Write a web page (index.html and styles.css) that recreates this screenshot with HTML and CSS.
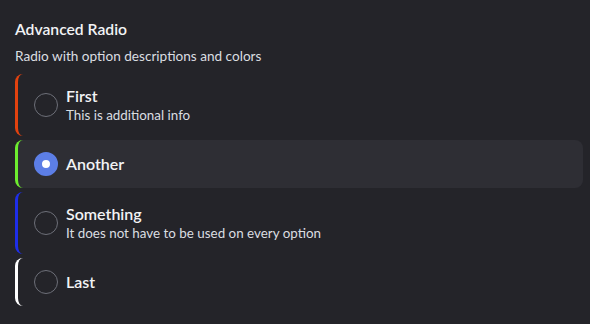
FILE: index.html
```html
<!DOCTYPE html>
<html lang="en">
<head>
    <meta charset="UTF-8">
    <title>Advanced Radio</title>
    <link rel="stylesheet" href="styles.css">
</head>
<body>
<div id="panel">
    <h2 class="title">Advanced Radio</h2>
    <p class="desc">Radio with option descriptions and colors</p>
    <ul class="radio-group">
        <li class="radio-item red">
            <span class="radio"></span>
            <div class="radio-text">
                <div class="radio-label">First</div>
                <div class="radio-info">This is additional info</div>
            </div>
        </li>
        <li class="radio-item green selected">
            <span class="radio"></span>
            <div class="radio-text">
                <div class="radio-label">Another</div>
            </div>
        </li>
        <li class="radio-item blue">
            <span class="radio"></span>
            <div class="radio-text">
                <div class="radio-label">Something</div>
                <div class="radio-info">It does not have to be used on every option</div>
            </div>
        </li>
        <li class="radio-item white">
            <span class="radio"></span>
            <div class="radio-text">
                <div class="radio-label">Last</div>
            </div>
        </li>
    </ul>
</div>
</body>
</html>
```
FILE: styles.css
```css
*{
    margin: 0;
    padding: 0;
    box-sizing: border-box;
}
ul{
    list-style: none;
}
body{
    background: #242429;
    font-family: Lato, "Noto Sans", sans-serif;
    color: #f2f3f5;
}
#panel{
    padding: 19px 7px 0 15px;
}
.title{
    font-size: 15.7px;
    line-height: 20px;
    font-weight: 600;
    color: #f2f3f5;
}
.desc{
    margin-top: 8px;
    font-size: 13.6px;
    line-height: 18px;
    color: #dbdee1;
}
.radio-group{
    margin-top: 9px;
    display: flex;
    flex-direction: column;
    gap: 4px;
}
.radio-item{
    display: flex;
    align-items: center;
    gap: 8px;
    padding: 12px 16px;
    border-left: 3px solid #fff;
    border-radius: 8px;
    cursor: pointer;
}
.radio-item.red{
    border-color: #e2420f;
}
.radio-item.green{
    border-color: #6ded2f;
}
.radio-item.blue{
    border-color: #1e2ee8;
}
.radio-item.white{
    border-color: #ffffff;
}
.radio-item.selected{
    background: #2e2e34;
}
.radio{
    flex: none;
    width: 24px;
    height: 24px;
    border: 1px solid #6d6f78;
    border-radius: 50%;
}
.selected .radio{
    border: 8px solid #5c7ee6;
    background: #fff;
}
.radio-label{
    font-size: 16px;
    line-height: 20px;
    font-weight: 600;
    color: #f2f3f5;
}
.radio-info{
    font-size: 13.4px;
    line-height: 18px;
    color: #dbdee1;
}
```
